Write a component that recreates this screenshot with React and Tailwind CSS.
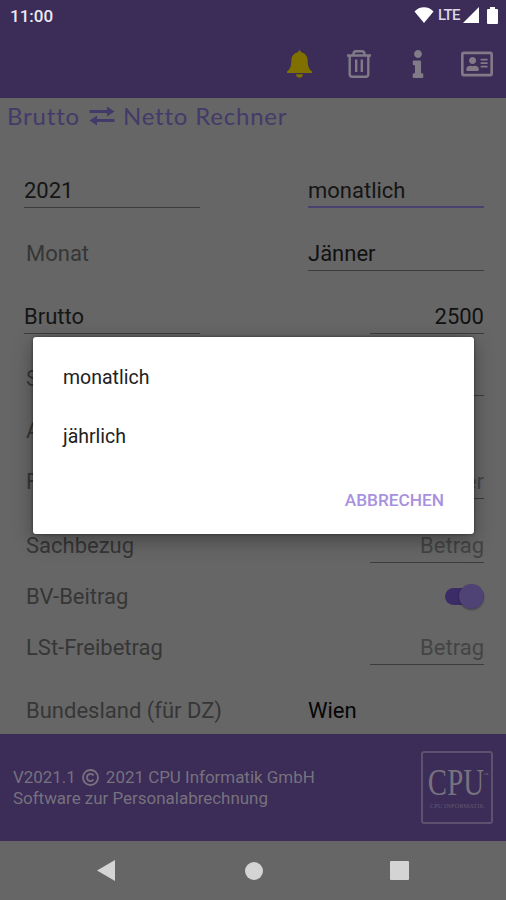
import React from 'react';
import { FaInfo, FaRegAddressCard } from 'react-icons/fa';

const rows = [
  { label: '2021', labelType: 'field', value: 'monatlich', valueType: 'active', height: 'h-[63px]' },
  { label: 'Monat', value: 'Jänner', valueType: 'select', height: 'h-[63px]' },
  { label: 'Brutto', labelType: 'field', value: '2500', valueType: 'amount', height: 'h-[63px]' },
  { label: 'SZ', value: '', valueType: 'select', height: 'h-[62px]' },
  { label: 'AV', height: 'h-[52px]' },
  { label: 'FB', value: 'Kinder', valueType: 'hint', height: 'h-[51px]' },
  { label: 'Sachbezug', value: 'Betrag', valueType: 'hint', height: 'h-[64px]' },
  { label: 'BV-Beitrag', valueType: 'switch', height: 'h-[51px]' },
  { label: 'LSt-Freibetrag', value: 'Betrag', valueType: 'hint', height: 'h-[51px]' },
  { label: 'Bundesland (für DZ)', value: 'Wien', valueType: 'plain', height: 'h-[63px]' }
];

const valueStyles = {
  active: 'w-[176px] border-b-2 border-[#4b4170] text-[#151515] pt-[3px]',
  select: 'w-[176px] border-b border-[#3c3c3c] text-[#111111] pt-[2px]',
  amount: 'w-[114px] border-b border-[#3c3c3c] text-[#111111] justify-end pt-[2px]',
  hint: 'w-[114px] border-b border-[#3c3c3c] text-[#444444] justify-end pt-[2px]',
  plain: 'w-[176px] text-[#050505] pt-[2px]'
};

const StatusBar = () => (
  <div className="flex h-[30px] items-center justify-between pl-[10px] pr-[8px] text-white">
    <span className="pt-[2px] text-[17px] font-medium leading-none text-[#ece8f4]">11:00</span>
    <div className="flex items-center">
      <svg className="h-[16px] w-[20px]" viewBox="0 0 20 16" fill="currentColor">
        <path d="M10 16 .5 4.5C3 1.800 6.300.3 10 .3s7 1.500 9.500 4.200z" />
      </svg>
      <span className="ml-[4px] text-[15px] font-medium leading-none tracking-[-0.6px] text-[#ddd8e6]">LTE</span>
      <svg className="ml-[3px] h-[16px] w-[16px]" viewBox="0 0 16 16" fill="currentColor">
        <path d="M16 0v16H0z" />
      </svg>
      <svg className="ml-[8px] h-[17px] w-[11px]" viewBox="0 0 11 17" fill="currentColor">
        <path d="M3 0h5v2h2q1 0 1 1v13q0 1-1 1H1q-1 0-1-1V3q0-1 1-1h2z" />
      </svg>
    </div>
  </div>
);

const Toolbar = () => (
  <div className="flex h-[68px] items-center pl-[287px] text-[#807b86]">
    <svg className="h-[28px] w-[25px]" viewBox="0 0 25 28" fill="#7f7000">
      <path d="M12.500 0 14.700 2.600c4 1 5.800 4 6 8.400.2 6 1.300 8 4.300 10.500V23H0v-1.500C3 19 4.100 17 4.300 11c.2-4.400 2-7.400 6-8.400z" />
      <path d="M8.800 24.200h7.400q-.8 3.500-3.700 3.500t-3.700-3.500z" />
    </svg>
    <svg className="ml-[35px] h-[28px] w-[24px]" viewBox="0 0 24 28" fill="none" stroke="currentColor" strokeWidth="2.400">
      <path d="M0 5.500h24M6.500 5.500V4q0-2.800 2.800-2.800h5.400q2.800 0 2.800 2.800v1.500M2.700 6v18q0 2.700 2.700 2.700h13.200q2.700 0 2.700-2.700V6M9.200 9.500V22M14.800 9.500V22" />
    </svg>
    <FaInfo className="ml-[33px] h-[28px] w-[28px]" />
    <FaRegAddressCard className="ml-[29px] h-[32px] w-[32px]" />
  </div>
);

const Switch = () => (
  <div className="flex h-[36px] w-[39px] items-center">
    <div className="flex h-[17px] w-[39px] items-center justify-end rounded-full bg-[#3b2b66]">
      <div className="h-[25px] w-[25px] shrink-0 rounded-full bg-[#4f4274] shadow-[0_1px_2px_rgba(0,0,0,0.35)]"></div>
    </div>
  </div>
);

const FormRow = ({ label, labelType, value, valueType, height }) => (
  <div className={`flex items-end justify-between ${height}`}>
    {labelType === 'field' ? (
      <div className="flex h-[36px] w-[176px] items-center border-b border-[#3c3c3c] pt-[2px] text-[#151515]">{label}</div>
    ) : (
      <div className="flex h-[36px] items-center pl-[2px] pt-[2px] text-[#363636]">{label}</div>
    )}
    {valueType === 'switch' && <Switch />}
    {valueType && valueType !== 'switch' && (
      <div className={`flex h-[36px] items-center ${valueStyles[valueType]}`}>{value}</div>
    )}
  </div>
);

const Footer = () => (
  <footer className="flex h-[107px] items-center justify-between bg-[#3b2c58] pl-[13px] pr-[13px] text-[#77727d]">
    <div className="text-[16.950px] leading-[21px]">
      <div className="flex items-center whitespace-pre">
        V2021.1
        <svg className="mx-[6.500px] h-[17px] w-[17px]" viewBox="0 0 17 17" fill="none" stroke="currentColor" strokeWidth="1.800">
          <circle cx="8.500" cy="8.500" r="7.500" />
          <path d="M11.500 6.500a3.600 3.600 0 1 0 0 4" />
        </svg>
        2021 CPU Informatik GmbH
      </div>
      <div>Software zur Personalabrechnung</div>
    </div>
    <div className="flex h-[73px] w-[72px] flex-col items-center rounded-[3px] border-2 border-[#5c516e] pt-[11px] font-['Liberation_Serif',serif]">
      <div className="flex h-[38px] items-start text-[38px] leading-[36px]">
        <span className="-ml-[7px] -mr-[9px] inline-block origin-center scale-x-[0.76]">CPU</span>
        <span className="text-[5px] leading-[22px]">™</span>
      </div>
      <div className="text-[6.500px] leading-[8px] text-[#625873]">CPU INFORMATIK</div>
    </div>
  </footer>
);

const NavBar = () => (
  <div className="flex h-[59px] items-center bg-[#666666] pl-[97px] text-[#d4d4d4]">
    <svg className="h-[21px] w-[18px]" viewBox="0 0 18 21" fill="currentColor">
      <path d="M18 0v21L0 10.500z" />
    </svg>
    <div className="ml-[130px] h-[18px] w-[18px] rounded-full bg-[#d4d4d4]"></div>
    <div className="ml-[127px] h-[19px] w-[19px] rounded-[1px] bg-[#d4d4d4]"></div>
  </div>
);

const PeriodDialog = () => (
  <div className="absolute left-[33px] top-[337px] flex h-[197px] w-[441px] flex-col rounded-[3px] bg-white px-[30px] pt-[11px] text-[19.5px] text-[#212121] shadow-[0_6px_20px_rgba(0,0,0,0.35),0_0_3px_rgba(0,0,0,0.5)]">
    <div className="flex h-[59px] items-center">monatlich</div>
    <div className="flex h-[59px] items-center">jährlich</div>
    <button className="mt-[22px] self-end text-[17.250px] font-medium leading-[24px] text-[#a892e0]">ABBRECHEN</button>
  </div>
);

const App = () => (
  <div className="relative h-[900px] w-[506px] overflow-hidden bg-[#666666] font-['Roboto',sans-serif]">
    <header className="bg-[#3b2c58]">
      <StatusBar />
      <Toolbar />
    </header>

    <main className="h-[636px]">
      <h1 className="flex h-[35px] items-center whitespace-pre pl-[7px] font-['Lato',sans-serif] text-[24px] tracking-[0.8px] text-[#443a69]">
        Brutto
        <svg className="ml-[9px] mr-[8px] h-[20px] w-[26px]" viewBox="0 0 26 20" fill="currentColor">
          <path d="M.500 4H18V.5l7.500 5-7.500 5V7H.500zM25.500 13H8V9.500l-7.500 5 7.500 5V16h17.500z" />
        </svg>
        Netto Rechner
      </h1>
      <div className="mt-[12px] pl-[24px] pr-[22px] text-[22px] leading-none">
        {rows.map((row) => (
          <FormRow key={row.label} {...row} />
        ))}
      </div>
    </main>

    <Footer />
    <NavBar />
    <PeriodDialog />
  </div>
);

export default App;
